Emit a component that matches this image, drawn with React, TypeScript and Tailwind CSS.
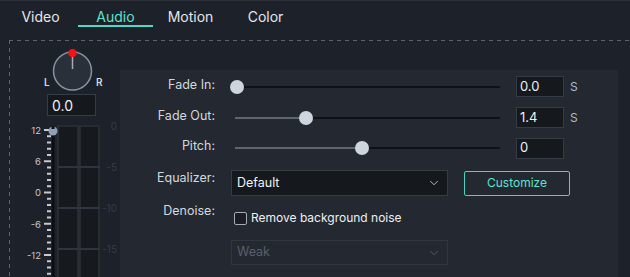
import React from "react";
import { ChevronDown } from "lucide-react";

const tabs = ["Video", "Audio", "Motion", "Color"];

const Knob = () => (
  <div className="flex items-end pl-[34px]">
    <span className="mb-[3px] w-[8px] text-[10px] leading-[12px] font-semibold text-[#d5dae0]">
      L
    </span>
    <svg width="42" height="43" viewBox="0 0 42 43">
      <circle cx="20.5" cy="23" r="19" fill="#2a3039" stroke="#8793a3" strokeWidth="1.5" />
      <line x1="20.5" y1="7" x2="20.5" y2="21" stroke="#a3adba" strokeWidth="1.5" />
      <circle cx="20.5" cy="5" r="4" fill="#ff1010" />
    </svg>
    <span className="mb-[3px] ml-[2px] text-[10px] leading-[12px] font-semibold text-[#d5dae0]">
      R
    </span>
  </div>
);

const Meter = () => {
  const ticks = [];
  for (let i = 0; i < 25; i++) {
    const y = 10 + i * 6.25;
    const major = i % 5 === 0;
    ticks.push(
      <rect key={i} x={major ? 34 : 37} y={y - 1} width={major ? 7 : 4} height="2" fill="#c3cad3" />
    );
  }
  const leftLabels = [
    ["12", 10],
    ["6", 41],
    ["0", 72],
    ["-6", 104],
    ["-12", 135],
  ] as const;
  const rightLabels = [
    ["0", 6],
    ["-5", 47],
    ["-10", 88],
    ["-15", 129],
  ] as const;
  return (
    <svg width="110" height="157" viewBox="0 0 110 157" className="mt-[4px]">
      {rightLabels.map(([t, y]) => (
        <text key={t} x="107" y={y + 3.5} fontSize="10" textAnchor="end" fill="#353c47" fontFamily="Inter, sans-serif">
          {t}
        </text>
      ))}
      <rect x="48" y="6" width="20" height="160" fill="#16191e" stroke="#2c3139" strokeWidth="1.5" />
      <rect x="70" y="6" width="19" height="160" fill="#16191e" stroke="#2c3139" strokeWidth="1.5" />
      {[47, 88, 129].map((y) => (
        <rect key={y} x="48" y={y - 1} width="42" height="2" fill="#2f353e" />
      ))}
      <rect x="42" y="8" width="2.5" height="160" fill="#0c0e12" />
      {ticks}
      {leftLabels.map(([t, y]) => (
        <text key={t} x="31" y={y + 3.5} fontSize="9.5" textAnchor="end" fill="#c3cad3" fontFamily="Inter, sans-serif">
          {t}
        </text>
      ))}
      <circle cx="43" cy="11" r="4.5" fill="#8fa0b4" />
      <rect x="41.5" y="6" width="3" height="3" fill="#0c0e12" />
    </svg>
  );
};

const Slider = ({ pos }: { pos: number }) => (
  <div className="relative ml-[20px] h-[14px] w-[265px]">
    <div className="absolute left-0 top-[6px] h-[2px] w-full bg-[#0f1115]" />
    <div className="absolute left-0 top-[6px] h-[2px] bg-[#5c6570]" style={{ width: pos }} />
    <div
      className="absolute top-0 h-[14px] w-[14px] rounded-full bg-[#cfd5de]"
      style={{ left: pos - 7 }}
    />
  </div>
);

const NumBox = ({ value, unit }: { value: string; unit?: string }) => (
  <div className="flex items-center">
    <div className="ml-[16px] flex h-[21px] w-[48px] items-center border border-[#363c46] bg-[#15181d] pl-[3px] text-[13px] text-[#eef0f3]">
      {value}
    </div>
    {unit && <span className="ml-[6px] text-[12px] text-[#b3bac4]">{unit}</span>}
  </div>
);

const Label = ({ children, lift }: { children: React.ReactNode; lift: string }) => (
  <span className={`w-[95px] shrink-0 text-right text-[12.5px] text-[#d3d8de] ${lift}`}>
    {children}
  </span>
);

export default function App() {
  return (
    <div
      className="h-[277px] w-[630px] overflow-hidden border-t border-[#2c3139] bg-[#1d2129]"
      style={{ fontFamily: "Inter, 'Liberation Sans', sans-serif" }}
    >
      <div className="flex pl-[3px]">
        {tabs.map((t) => (
          <div
            key={t}
            className={
              t === "Audio"
                ? "h-[26px] w-[75px] border-b-2 border-[#4fd8c3] pt-[7px] text-center text-[14px] leading-[17px] text-[#5fe3cf]"
                : "h-[26px] w-[75px] pt-[7px] text-center text-[14px] leading-[17px] text-[#e4e7eb]"
            }
          >
            {t}
          </div>
        ))}
      </div>

      {/* dashed frame drawn with gradients to get 4px dashes */}
      <div className="ml-[9px] mt-[13px] flex h-[300px] w-[700px] bg-[image:repeating-linear-gradient(90deg,#5a626e_0_4px,transparent_4px_8px),repeating-linear-gradient(180deg,#5a626e_0_4px,transparent_4px_8px)] bg-[length:100%_1px,1px_100%] bg-no-repeat pl-[1px] pt-[1px]">
        <div className="w-[110px] shrink-0 pt-[7px]">
          <Knob />
          <div className="ml-[37px] mt-[3px] flex h-[22px] w-[49px] items-center border border-[#363c46] bg-[#15181d] pl-[4px] text-[14px] text-[#eef0f3]">
            0.0
          </div>
          <Meter />
        </div>

        <div className="mt-[29px] h-[260px] w-[498px] bg-[#232831] pt-[6px]">
          <div className="flex h-[21px] items-center">
            <Label lift="mb-[3px]">Fade In:</Label>
            <Slider pos={2} />
            <NumBox value="0.0" unit="S" />
          </div>
          <div className="mt-[10px] flex h-[21px] items-center">
            <Label lift="mb-[3px]">Fade Out:</Label>
            <Slider pos={71} />
            <NumBox value="1.4" unit="S" />
          </div>
          <div className="mt-[9px] flex h-[22px] items-center">
            <Label lift="mb-[3px]">Pitch:</Label>
            <Slider pos={127} />
            <NumBox value="0" />
          </div>
          <div className="mt-[11px] flex h-[26px] items-center">
            <Label lift="mb-[10px]">Equalizer:</Label>
            <div className="ml-[16px] flex h-[26px] w-[217px] items-center justify-between border border-[#363c46] bg-[#15181d] pl-[5px] pr-[6px] text-[12.5px] text-[#f0f2f5]">
              Default
              <ChevronDown size={14} strokeWidth={1.5} className="text-[#c5cbd3]" />
            </div>
            <div className="ml-[16px] flex h-[25px] w-[106px] items-center justify-center rounded-[2px] border-[1.5px] border-[#45d6bf] text-[12px] text-[#5fe3cf]">
              Customize
            </div>
          </div>
          <div className="mt-[12px] flex h-[20px] items-center">
            <Label lift="mb-[14px]">Denoise:</Label>
            <div className="ml-[19px] h-[13px] w-[13px] rounded-[2px] border-[1.5px] border-[#a3abb6] bg-[#1a1e24]" />
            <span className="ml-[4px] text-[12px] text-[#eef0f3]">Remove background noise</span>
          </div>
          <div className="ml-[111px] mt-[12px] flex h-[25px] w-[217px] items-center justify-between border border-[#30353e] pl-[5px] pr-[6px] text-[12.5px] text-[#59606b]">
            Weak
            <ChevronDown size={14} strokeWidth={1.5} className="text-[#59606b]" />
          </div>
        </div>
      </div>
    </div>
  );
}
